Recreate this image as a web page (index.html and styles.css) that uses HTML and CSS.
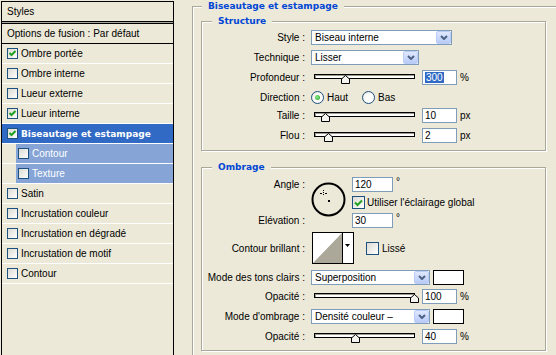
FILE: index.html
```html
<!DOCTYPE html>
<html lang="fr">
<head>
  <meta charset="UTF-8">
  <title>Style de calque</title>
  <link rel="stylesheet" href="styles.css">
</head>
<body>
  <div class="dialog">
    <!-- Liste des effets -->
    <div class="layers">
      <div class="layers-title">Styles</div>
      <div class="layers-blend">Options de fusion : Par défaut</div>
      <ul class="layer-list">
        <li class="layer"><span class="cb"><svg width="9" height="9" viewBox="0 0 9 9"><path d="M1.5 4l2 2 4-4" fill="none" stroke="#21a121" stroke-width="2"/></svg></span>Ombre portée</li>
        <li class="layer"><span class="cb"></span>Ombre interne</li>
        <li class="layer"><span class="cb"></span>Lueur externe</li>
        <li class="layer"><span class="cb"><svg width="9" height="9" viewBox="0 0 9 9"><path d="M1.5 4l2 2 4-4" fill="none" stroke="#21a121" stroke-width="2"/></svg></span>Lueur interne</li>
        <li class="layer selected"><span class="cb"><svg width="9" height="9" viewBox="0 0 9 9"><path d="M1.5 4l2 2 4-4" fill="none" stroke="#21a121" stroke-width="2"/></svg></span>Biseautage et estampage</li>
        <li class="layer sub"><span class="cb"></span>Contour</li>
        <li class="layer sub"><span class="cb"></span>Texture</li>
        <li class="layer"><span class="cb"></span>Satin</li>
        <li class="layer"><span class="cb"></span>Incrustation couleur</li>
        <li class="layer"><span class="cb"></span>Incrustation en dégradé</li>
        <li class="layer"><span class="cb"></span>Incrustation de motif</li>
        <li class="layer"><span class="cb"></span>Contour</li>
      </ul>
    </div>

    <!-- Réglages -->
    <fieldset class="group">
      <legend>Biseautage et estampage</legend>

      <fieldset class="box structure">
        <legend>Structure</legend>
        <div class="row">
          <span class="lbl">Style :</span>
          <div class="select sel-style"><span>Biseau interne</span><span class="drop"><svg width="8" height="5" viewBox="0 0 8 5"><path d="M1 1l3 3 3-3" fill="none" stroke="#4d6185" stroke-width="2"/></svg></span></div>
        </div>
        <div class="row">
          <span class="lbl">Technique :</span>
          <div class="select sel-tech"><span>Lisser</span><span class="drop"><svg width="8" height="5" viewBox="0 0 8 5"><path d="M1 1l3 3 3-3" fill="none" stroke="#4d6185" stroke-width="2"/></svg></span></div>
        </div>
        <div class="row h21">
          <span class="lbl">Profondeur :</span>
          <div class="slider"><div class="track"><svg class="thumb" style="left:30%" width="9" height="9" viewBox="0 0 9 9"><path d="M0.5 8.5V4L4.5 0.5 8.5 4V8.5Z" fill="#f5f4ee" stroke="#000"/></svg></div></div>
          <span class="num"><span class="picked">300</span></span>
          <span class="unit">%</span>
        </div>
        <div class="row h19">
          <span class="lbl">Direction :</span>
          <span class="opt"><span class="radio on"></span>Haut</span>
          <span class="opt"><span class="radio"></span>Bas</span>
        </div>
        <div class="row h17">
          <span class="lbl">Taille :</span>
          <div class="slider"><div class="track"><svg class="thumb" style="left:10%" width="9" height="9" viewBox="0 0 9 9"><path d="M0.5 8.5V4L4.5 0.5 8.5 4V8.5Z" fill="#f5f4ee" stroke="#000"/></svg></div></div>
          <span class="num">10</span>
          <span class="unit">px</span>
        </div>
        <div class="row h23">
          <span class="lbl">Flou :</span>
          <div class="slider"><div class="track"><svg class="thumb" style="left:13%" width="9" height="9" viewBox="0 0 9 9"><path d="M0.5 8.5V4L4.5 0.5 8.5 4V8.5Z" fill="#f5f4ee" stroke="#000"/></svg></div></div>
          <span class="num">2</span>
          <span class="unit">px</span>
        </div>
      </fieldset>

      <fieldset class="box shading">
        <legend>Ombrage</legend>
        <div class="angle">
          <span class="glbl r1">Angle :</span>
          <svg class="dial" width="35" height="35" viewBox="0 0 35 35">
            <circle cx="17.5" cy="17.5" r="16" fill="none" stroke="#000" stroke-width="2"/>
            <rect x="17" y="18" width="2" height="2" fill="#000"/>
            <g fill="#000">
              <rect x="12" y="8" width="1" height="1"/>
              <rect x="12" y="10" width="1" height="1"/>
              <rect x="12" y="12" width="1" height="1"/>
              <rect x="9" y="11" width="1" height="1"/>
              <rect x="10" y="11" width="1" height="1"/>
              <rect x="14" y="11" width="1" height="1"/>
              <rect x="15" y="11" width="1" height="1"/>
            </g>
          </svg>
          <span class="cell r1"><span class="num wide">120</span><span class="deg">°</span></span>
          <span class="cell r2"><span class="cb big"><svg width="11" height="11" viewBox="0 0 11 11"><path d="M2 5.5l2.5 2.5 4.5-4.5" fill="none" stroke="#21a121" stroke-width="2"/></svg></span>Utiliser l'éclairage global</span>
          <span class="glbl r3">Elévation :</span>
          <span class="cell r3"><span class="num wide">30</span><span class="deg">°</span></span>
        </div>
        <div class="row h38">
          <span class="lbl">Contour brillant :</span>
          <svg class="contour" width="42" height="32" viewBox="0 0 42 32">
            <rect x="0.5" y="0.5" width="41" height="31" fill="#fff" stroke="#000"/>
            <path d="M1 31L30 1V31Z" fill="#aca899"/>
            <path d="M30.5 1V31" stroke="#000"/>
            <path d="M33 12h5l-2.5 3z" fill="#000"/>
          </svg>
          <span class="cb big lisse"></span>Lissé
        </div>
        <div class="row">
          <span class="lbl">Mode des tons clairs :</span>
          <div class="select sel-mode"><span>Superposition</span><span class="drop"><svg width="8" height="5" viewBox="0 0 8 5"><path d="M1 1l3 3 3-3" fill="none" stroke="#4d6185" stroke-width="2"/></svg></span></div>
          <span class="swatch"></span>
        </div>
        <div class="row h19">
          <span class="lbl">Opacité :</span>
          <div class="slider"><div class="track"><svg class="thumb" style="left:100%" width="9" height="9" viewBox="0 0 9 9"><path d="M0.5 8.5V4L4.5 0.5 8.5 4V8.5Z" fill="#f5f4ee" stroke="#000"/></svg></div></div>
          <span class="num">100</span>
          <span class="unit">%</span>
        </div>
        <div class="row h21">
          <span class="lbl">Mode d'ombrage :</span>
          <div class="select sel-mode"><span>Densité couleur –</span><span class="drop"><svg width="8" height="5" viewBox="0 0 8 5"><path d="M1 1l3 3 3-3" fill="none" stroke="#4d6185" stroke-width="2"/></svg></span></div>
          <span class="swatch"></span>
        </div>
        <div class="row h19">
          <span class="lbl">Opacité :</span>
          <div class="slider"><div class="track"><svg class="thumb" style="left:40%" width="9" height="9" viewBox="0 0 9 9"><path d="M0.5 8.5V4L4.5 0.5 8.5 4V8.5Z" fill="#f5f4ee" stroke="#000"/></svg></div></div>
          <span class="num">40</span>
          <span class="unit">%</span>
        </div>
      </fieldset>
    </fieldset>
  </div>
</body>
</html>
```

FILE: styles.css
```css
* {
  box-sizing: border-box;
}
body {
  margin: 0;
  height: 355px;
  overflow: hidden;
  background: #ece9d8;
  font-family: "Liberation Sans", Arial, sans-serif;
  font-size: 10px;
  color: #000;
}
.dialog {
  display: flex;
  align-items: flex-start;
}

/* Liste des effets */
.layers {
  width: 173px;
  height: 354px;
  margin: 1px 0 0 1px;
  border: 1px solid #000;
  border-bottom: 0;
  flex-shrink: 0;
}
.layers-title {
  height: 20px;
  line-height: 19px;
  padding-left: 5px;
  border-bottom: 1px solid #000;
  box-shadow: 0 1px 0 #aca899;
}
.layers-blend {
  height: 21px;
  margin-top: 1px;
  line-height: 19px;
  padding-left: 5px;
  border-top: 1px solid #000;
  border-bottom: 1px solid #000;
}
.layer-list {
  list-style: none;
  margin: 0;
  padding: 0;
}
.layer {
  display: flex;
  align-items: center;
  height: 20px;
  padding-left: 5px;
  border-bottom: 1px solid #fff;
  white-space: nowrap;
}
.layer.selected {
  background: #316ac5;
  color: #fff;
  font-family: "DejaVu Sans", sans-serif;
  font-weight: bold;
  font-size: 9px;
}
.layer.sub {
  padding-left: 16px;
  color: #fff;
  background: linear-gradient(to right, #ece9d8 14px, #86a5d6 14px);
}
.cb {
  display: flex;
  align-items: center;
  justify-content: center;
  width: 11px;
  height: 11px;
  margin-right: 3px;
  flex-shrink: 0;
  border: 1px solid #1c5180;
  background: linear-gradient(135deg, #dcdad2, #fff);
}
.cb.big {
  width: 13px;
  height: 13px;
  margin-right: 2px;
}
.cb.lisse {
  margin-left: 12px;
  margin-right: 3px;
}

/* Cadres */
fieldset {
  margin: 0;
  min-inline-size: 0;
  border: 1px solid #aca899;
  box-shadow: inset 1px 1px 0 #fff, 1px 1px 0 #fff;
}
legend {
  padding: 0 6px;
  line-height: 12px;
  background: #ece9d8;
  color: #0046d5;
  font-family: "DejaVu Sans", sans-serif;
  font-weight: bold;
  font-size: 9px;
}
.group {
  width: 380px;
  flex-shrink: 0;
  margin-left: 18px;
  padding: 3px 0 5px 8px;
  border-bottom: 0;
  box-shadow: inset 1px 1px 0 #fff;
}
.group > legend {
  margin-left: 1px;
}
.box {
  width: 345px;
  padding: 0 6px 3px 6px;
}
.box > legend {
  margin-left: 4px;
}
.shading {
  margin-top: 10px;
  padding-top: 1px;
  padding-bottom: 4px;
}

/* Lignes */
.row {
  display: flex;
  align-items: center;
  height: 20px;
  white-space: nowrap;
}
.row.h17 { height: 17px; }
.row.h19 { height: 19px; }
.row.h21 { height: 21px; }
.row.h23 { height: 23px; }
.row.h38 { height: 38px; }
.lbl {
  display: flex;
  justify-content: flex-end;
  width: 97px;
  margin-right: 6px;
  flex-shrink: 0;
  white-space: nowrap;
}

/* Listes déroulantes */
.select {
  display: flex;
  align-items: center;
  justify-content: space-between;
  height: 15px;
  padding-left: 3px;
  border: 1px solid #7f9db9;
  background: #fff;
}
.sel-style { width: 141px; }
.sel-tech { width: 108px; }
.sel-mode { width: 119px; }
.drop {
  display: flex;
  align-items: center;
  justify-content: center;
  width: 15px;
  height: 13px;
  border: 1px solid #bccdf5;
  border-radius: 2px;
  background: linear-gradient(#e0e8fd, #b8cbf8);
}

/* Curseurs */
.slider {
  width: 107px;
  height: 15px;
  padding: 4px 3px 0 3px;
  flex-shrink: 0;
}
.track {
  position: relative;
  height: 5px;
  border: 1px solid #000;
  background: #fff;
  box-shadow: inset 1px 1px 0 #9d9a8b;
}
.thumb {
  position: absolute;
  top: 0;
  margin-left: -4px;
}

/* Champs */
.num {
  display: block;
  width: 35px;
  height: 15px;
  margin-left: 4px;
  padding-left: 2px;
  line-height: 13px;
  border: 1px solid #7f9db9;
  background: #fff;
}
.num.wide {
  width: 41px;
  margin-left: 0;
}
.picked {
  display: inline-block;
  background: #316ac5;
  color: #fff;
  line-height: 11px;
  padding: 0 1px;
  margin-top: 1px;
}
.unit {
  margin-left: 3px;
}
.deg {
  margin-left: 3px;
  align-self: flex-start;
  line-height: 10px;
}
.swatch {
  width: 31px;
  height: 15px;
  margin-left: 3px;
  border: 1px solid #000;
  background: #fff;
}

/* Boutons radio */
.opt {
  display: flex;
  align-items: center;
  width: 51px;
}
.radio {
  display: flex;
  align-items: center;
  justify-content: center;
  width: 13px;
  height: 13px;
  margin-right: 3px;
  border: 1px solid #1c5180;
  border-radius: 50%;
  background: radial-gradient(circle at 60% 60%, #fff 40%, #dcd9cd);
}
.radio.on::after {
  content: "";
  width: 5px;
  height: 5px;
  border-radius: 50%;
  background: radial-gradient(circle at 40% 40%, #8ae98a, #21a121);
}

/* Angle */
.angle {
  display: grid;
  grid-template-columns: 97px 35px auto;
  grid-template-rows: repeat(3, 18px);
  column-gap: 6px;
  align-items: center;
  margin-top: 1px;
}
.glbl {
  grid-column: 1;
  text-align: right;
  white-space: nowrap;
}
.r1 { grid-row: 1; }
.r2 { grid-row: 2; }
.r3 { grid-row: 3; }
.cell {
  grid-column: 3;
  display: flex;
  align-items: center;
  white-space: nowrap;
}
.dial {
  grid-column: 2;
  grid-row: 1 / 4;
  align-self: start;
  margin-top: 7px;
}
.contour {
  margin-left: 1px;
  flex-shrink: 0;
}
```
